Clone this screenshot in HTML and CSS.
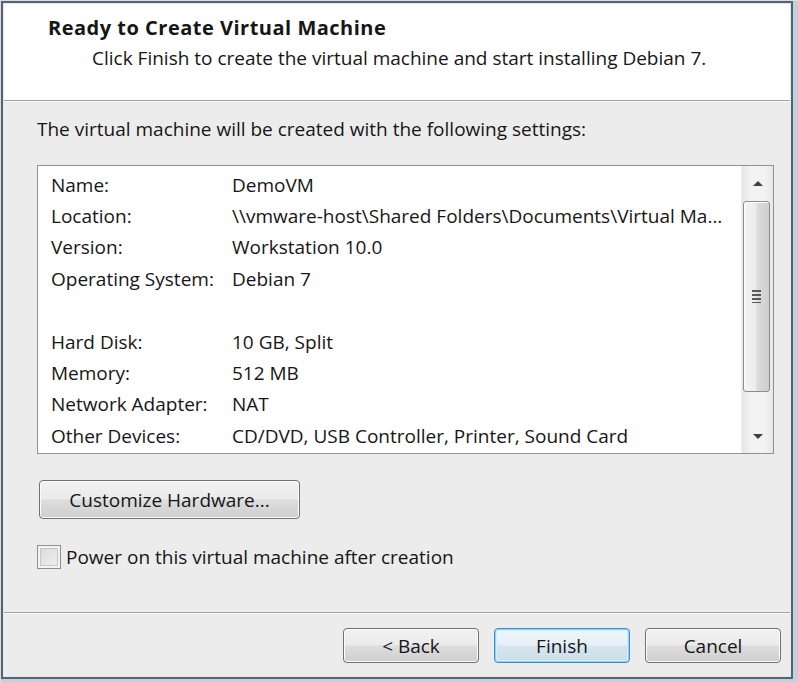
FILE: index.html
```html
<!DOCTYPE html>
<html>
<head>
<meta charset="utf-8">
<link rel="stylesheet" href="styles.css">
</head>
<body>
<div class="frame">
  <div class="dialog">
    <div class="header">
      <div class="title">Ready to Create Virtual Machine</div>
      <div class="subtitle">Click Finish to create the virtual machine and start installing Debian 7.</div>
    </div>
    <div class="body">
      <div class="intro">The virtual machine will be created with the following settings:</div>
      <div class="listbox">
        <div class="rows">
          <div class="row"><span class="key">Name:</span><span class="val">DemoVM</span></div>
          <div class="row"><span class="key">Location:</span><span class="val">\\vmware-host\Shared Folders\Documents\Virtual Ma…</span></div>
          <div class="row"><span class="key">Version:</span><span class="val">Workstation 10.0</span></div>
          <div class="row"><span class="key">Operating System:</span><span class="val">Debian 7</span></div>
          <div class="row blank"></div>
          <div class="row"><span class="key">Hard Disk:</span><span class="val">10 GB, Split</span></div>
          <div class="row"><span class="key">Memory:</span><span class="val">512 MB</span></div>
          <div class="row"><span class="key">Network Adapter:</span><span class="val">NAT</span></div>
          <div class="row"><span class="key">Other Devices:</span><span class="val">CD/DVD, USB Controller, Printer, Sound Card</span></div>
        </div>
        <div class="scrollbar">
          <div class="sb-btn"><span class="arrow-up"></span></div>
          <div class="thumb"><span class="grip"></span></div>
          <div class="track"></div>
          <div class="sb-btn"><span class="arrow-down"></span></div>
        </div>
      </div>
      <div class="custom-row"><button class="btn btn-custom">Customize Hardware...</button></div>
      <label class="check-row"><span class="checkbox"></span><span class="check-label">Power on this virtual machine after creation</span></label>
    </div>
    <div class="footer">
      <button class="btn btn-foot">&lt; Back</button>
      <button class="btn btn-foot btn-default">Finish</button>
      <button class="btn btn-foot">Cancel</button>
    </div>
  </div>
</div>
</body>
</html>
```
FILE: styles.css
```css
html, body {
  margin: 0;
  padding: 0;
}
body {
  background: #c8d5e3;
  font-family: "Open Sans", "Noto Sans", sans-serif;
  font-size: 19px;
  color: #161616;
}
.frame {
  width: 798px;
  height: 682px;
  box-sizing: border-box;
  padding: 1px 5px 3px 1px;
  background: #c3d0de;
  box-shadow: inset 1px 1px 0 #d8dde3;
}
.dialog {
  height: 100%;
  box-sizing: border-box;
  border: 2px solid #56626f;
  display: flex;
  flex-direction: column;
  background: #ececec;
  padding: 1px;
  box-shadow: inset 0 0 0 1px #e4e8ec;
}
.header {
  background: #ffffff;
  height: 97px;
  box-sizing: border-box;
  padding: 12px 0 0 44px;
  border-bottom: 1px solid #a0a0a0;
  line-height: 24px;
}
.title {
  font-weight: 700;
  font-size: 20px;
  letter-spacing: 0.5px;
}
.subtitle {
  margin-top: 6px;
  padding-left: 44px;
}
.body {
  flex: 1;
  border-top: 1px solid #fbfbfb;
  padding: 15px 16px 0 33px;
  display: flex;
  flex-direction: column;
}
.intro {
  line-height: 24px;
}
.listbox {
  margin-top: 24px;
  height: 289px;
  box-sizing: border-box;
  border: 1px solid #8f9194;
  background: #ffffff;
  display: flex;
  overflow: hidden;
  flex-shrink: 0;
}
.rows {
  flex: 1;
  padding: 3.6px 0 0 13px;
  overflow: hidden;
}
.row {
  display: grid;
  grid-template-columns: 181px 1fr;
  height: 31.4px;
  line-height: 31.4px;
  white-space: nowrap;
}
.val {
  overflow: hidden;
}
.scrollbar {
  width: 31px;
  display: flex;
  flex-direction: column;
  background: linear-gradient(to right, #e6e6e6, #f3f3f3 30%, #f3f3f3 70%, #e8e8e8);
  border-left: 1px solid #eeeeee;
}
.sb-btn {
  height: 34px;
  display: flex;
  align-items: center;
  justify-content: center;
}
.arrow-up {
  width: 0;
  height: 0;
  border-left: 5px solid transparent;
  border-right: 5px solid transparent;
  border-bottom: 5px solid #404040;
}
.arrow-down {
  width: 0;
  height: 0;
  border-left: 5px solid transparent;
  border-right: 5px solid transparent;
  border-top: 5px solid #404040;
}
.thumb {
  height: 191px;
  margin: 1px 3px 0 1px;
  box-sizing: border-box;
  border: 1px solid #8c8c8c;
  border-radius: 3px;
  background: linear-gradient(to right, #f4f4f4, #ececec 45%, #dadada 55%, #cfcfcf);
  box-shadow: inset 1px 1px 0 #ffffff;
  display: flex;
  align-items: center;
  justify-content: center;
}
.grip {
  width: 9px;
  height: 13px;
  background: repeating-linear-gradient(to bottom, #5a5a5a 0, #5a5a5a 2px, transparent 2px, transparent 4px);
}
.track {
  flex: 1;
}
.btn {
  font-family: "Open Sans", "Noto Sans", sans-serif;
  font-size: 19px;
  color: #161616;
  border: 1px solid #707070;
  border-radius: 4px;
  background: linear-gradient(to bottom, #f2f2f2 0%, #ebebeb 48%, #dddddd 52%, #cfcfcf 100%);
  box-shadow: inset 0 0 0 1px #fcfcfc;
  padding: 0;
  line-height: 22px;
}
.custom-row {
  margin-top: 26px;
  padding-left: 2px;
}
.btn-custom {
  width: 261px;
  height: 39px;
}
.check-row {
  margin-top: 26px;
  display: flex;
  align-items: center;
  height: 24px;
}
.checkbox {
  width: 24px;
  height: 24px;
  box-sizing: border-box;
  border: 1px solid #8e8f8f;
  background: linear-gradient(135deg, #d6d6d6, #f4f4f4);
  box-shadow: inset 0 0 0 2px #f4f4f4, inset 0 0 0 3px #c6c6c6;
}
.check-label {
  margin-left: 5px;
  line-height: 24px;
}
.footer {
  height: 64px;
  border-top: 1px solid #a0a0a0;
  box-shadow: inset 0 1px 0 #fbfbfb;
  display: flex;
  justify-content: flex-end;
  align-items: flex-start;
  gap: 15px;
  padding: 15px 9px 0 0;
  box-sizing: border-box;
  flex-shrink: 0;
}
.btn-foot {
  width: 136px;
  height: 35px;
}
.btn-default {
  border-color: #3c8fcc;
  box-shadow: inset 0 0 0 1px #8fd3f7, inset 0 0 0 2px #d6eefb;
  background: linear-gradient(to bottom, #eef6fb 0%, #e6f0f7 48%, #d7e6f0 52%, #cbdde9 100%);
}
```
